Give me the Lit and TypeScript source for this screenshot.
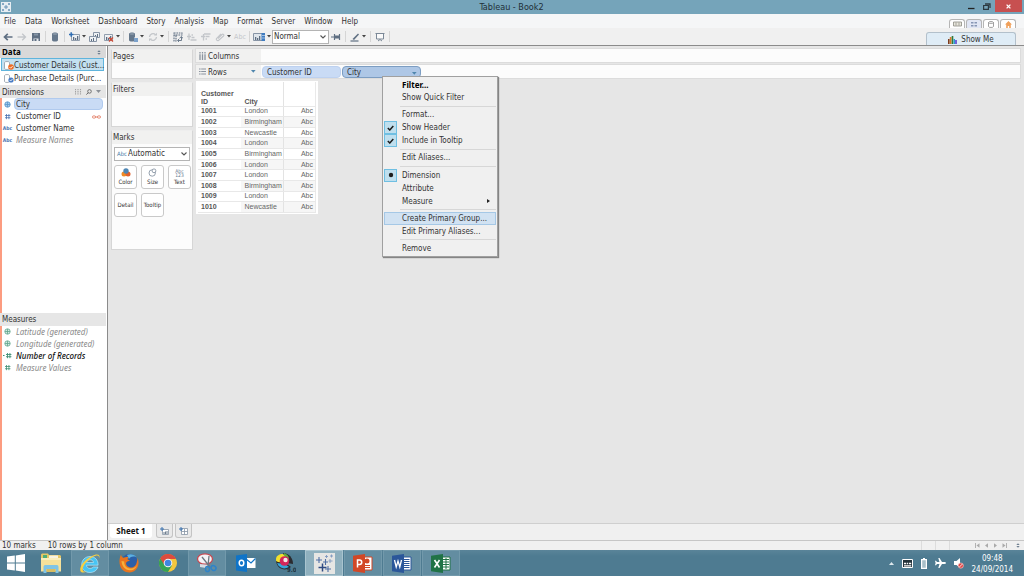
import { LitElement, html, css, svg, nothing, TemplateResult } from "lit";
import { customElement, property } from "lit/decorators.js";
import { classMap } from "lit/directives/class-map.js";

const glyph = (w: number, h: number, body: unknown) =>
  html`<svg class="g" width=${w} height=${h} viewBox="0 0 ${w} ${h}" aria-hidden="true">${body}</svg>`;

const S = "#5f6f82";
const F = "#c3c6ca";
const chart = svg`<path d="M1.5 2.5h8v6h-8z" fill="#eef1f4" stroke="#8794a5" stroke-width=".9"/><path d="M3 8V5h1.3v3zM5 8V6h1.3v2zM7 8V4h1.3v4z" fill=${S}/>`;
const plus = svg`<path d="M0 2.5h4.4M2.2 .3v4.4" stroke="#2f6eb4" stroke-width="1.5"/>`;
const cylinder = (x = 2) =>
  svg`<path d="M${x} 2c0-2 6-2 6 0v6c0 2-6 2-6 0z" fill="#66788c"/><ellipse cx=${x + 3} cy="2" rx="2.4" ry=".8" fill="#93a1b0"/>`;

const icons: Record<string, TemplateResult> = {
  app: glyph(10, 10, svg`<path d="M0 0h10v10H0z" fill="#e6edf2"/><path d="M5 3v4M3 5h4M2 1v2M1 2h2M8 1v2M7 2h2M2 7v2M1 8h2M8 7v2M7 8h2" stroke="#5b8bb0" stroke-width=".9"/>`),
  back: glyph(10, 10, svg`<path d="M9.5 5H2M4.8 1.8L1.5 5l3.3 3.2" fill="none" stroke=${S} stroke-width="1.7"/>`),
  forward: glyph(10, 10, svg`<path d="M.5 5H8M5.2 1.8L8.500 5 5.2 8.2" fill="none" stroke=${F} stroke-width="1.3"/>`),
  save: glyph(10, 10, svg`<path d="M1 1h8v8H1z" fill=${S}/><path d="M3 1.5h4v2H3z" fill="#8594a5"/><path d="M2.5 6.5h5V9h-5z" fill="#e8ebee"/><path d="M3.5 7h2v2h-2z" fill=${S}/>`),
  db: glyph(10, 10, cylinder()),
  newSheet: glyph(11, 10, svg`<g transform="translate(1 0)">${chart}</g>${plus}`),
  duplicate: glyph(11, 10, svg`<path d="M4.5.5h6v5h-6z" fill="#eef1f4" stroke="#8794a5"/><path d="M.5 4.5h7v5h-7z" fill="#eef1f4" stroke="#8794a5"/><path d="M2 9V7h1v2zM4 9V6h1v3zM8 5V2h1v3zM6 4V3h1v1z" fill=${S}/>`),
  clear: glyph(11, 10, svg`${chart}<path d="M6 5.5l4 4M10 5.5l-4 4" stroke="#cf4a34" stroke-width="1.3"/>`),
  dbPause: glyph(10, 10, svg`${cylinder(1)}<path d="M6 5.5h4V10H6z" fill="#f0f0f0"/><path d="M7 6v4M9 6v4" stroke="#2f6eb4" stroke-width="1.2"/>`),
  refresh: glyph(10, 10, svg`<path d="M1.5 5a3.5 3.5 0 0 1 6-2.3M8.5 5a3.5 3.5 0 0 1-6 2.3" fill="none" stroke=${F} stroke-width="1.3"/><path d="M6 3.5h3V.8zM4 6.5H1v2.7z" fill=${F}/>`),
  swap: glyph(10, 10, svg`<path d="M1 1h8v2H1zM1 3h2v6H1z" fill="none" stroke=${S} stroke-width="1.1" stroke-dasharray="1.6 .8"/><path d="M5 8.5h3.5V5M6.5 6.2L8.5 4.5 10 6.5M6 7L4.5 8.5 6 10" fill="none" stroke=${S} stroke-width=".9"/>`),
  sortAsc: glyph(10, 10, svg`<path d="M2 8V1.5M0 4.5h4M4.5 3h1.500M4.500 5.500h3M3.500 8h6" fill="none" stroke=${F} stroke-width="1.3"/>`),
  sortDesc: glyph(10, 10, svg`<path d="M2.5 2v6.5M0 4.5h4M3 2h6.5M4.5 4.5h4M4.5 7H6" fill="none" stroke=${F} stroke-width="1.3"/>`),
  clip: glyph(10, 10, svg`<path d="M3 6.5l4-4a1 1 0 0 1 1.5 1.5l-5 4.5A1.5 1.5 0 0 1 1.5 6.500l4.500-4.700" fill="none" stroke=${F} stroke-width="1.1"/>`),
  showCard: glyph(12, 10, svg`<path d="M.5 1.5h11v7H.5z" fill="#dfe5eb" stroke="#8794a5"/><path d="M2 8V5h1.3v3zM4 8V6h1.3v2zM6 8V4h1.3v4z" fill=${S}/><path d="M8.5 1H12v8H8.5z" fill="#3f7cc0"/><path d="M9 3.5h3M9 6h3" stroke="#cfe0f2" stroke-width=".7"/>`),
  pin: glyph(10, 8, svg`<path d="M0 4h3M3.5 1v6M8.5 1v6" stroke=${S} stroke-width="1.2"/><path d="M4 2.5h4v3H4z" fill=${S}/>`),
  pen: glyph(10, 10, svg`<path d="M2.5 7L8 1.5l1 1L4 8z" fill=${S}/><path d="M.5 9h8" stroke=${S} stroke-width="1.2"/>`),
  present: glyph(10, 10, svg`<path d="M.5 1.5h9M1.5 1.5v5.5h7V1.5" fill="#fafafa" stroke="#7b8897"/><path d="M3 9l2-1.5L7 9" fill="none" stroke="#7b8897"/>`),
  caret: glyph(4, 3, svg`<path d="M0 0h4L2 2.5z" fill="#444"/>`),
  caretGrey: glyph(5, 3, svg`<path d="M0 0h5L2.5 3z" fill="#8a8f96"/>`),
  caretBlue: glyph(5, 3, svg`<path d="M0 0h4.6L2.3 2.7z" fill="#4f86ad"/>`),
  source: glyph(10, 9, svg`<path d="M.5 1.5c0-1.3 5-1.3 5 0v6c0 1.3-5 1.3-5 0z" fill="#fff" stroke="#8e9aa6" stroke-width=".8"/><circle cx="7" cy="6" r="2.8" fill="#ef6b22"/><path d="M5.5 6l1.2 1.2L8.7 5" stroke="#fff" stroke-width=".8" fill="none"/>`),
  sourceBlue: glyph(10, 9, svg`<path d="M.5 1.5c0-1.3 5-1.3 5 0v6c0 1.3-5 1.3-5 0z" fill="#fff" stroke="#8e9aa6" stroke-width=".8"/><circle cx="7" cy="6" r="2.6" fill="#4a7cc4"/><path d="M5.7 6l1 1L8.5 5" stroke="#fff" stroke-width=".8" fill="none"/>`),
  globe: glyph(7, 7, svg`<circle cx="3.5" cy="3.5" r="2.7" fill="#a9cdec" stroke="#5b97cc" stroke-width=".9"/><path d="M3.5 1v5M1 3.5h5" stroke="#5b97cc" stroke-width=".8"/>`),
  globeGreen: glyph(7, 7, svg`<circle cx="3.5" cy="3.5" r="2.7" fill="#d5ebe3" stroke="#5fa58d" stroke-width=".8"/><path d="M3.5 1v5M1 3.5h5" stroke="#5fa58d" stroke-width=".8"/>`),
  hash: glyph(7, 7, svg`<path d="M2.5 1v5.2M4.9 1v5.2M1 2.5h5.4M1 4.7h5.4" stroke="#4a72b0" stroke-width=".8"/>`),
  hashGreen: glyph(7, 7, svg`<path d="M2.5 1v5.2M4.9 1v5.2M1 2.5h5.4M1 4.7h5.4" stroke="#3f9075" stroke-width=".8"/>`),
  calcHash: glyph(9, 7, svg`<path d="M0 3.5h1.5" stroke="#3f9075" stroke-width="1.2"/><path d="M4.5 1v5.2M6.9 1v5.2M3 2.5h5.4M3 4.7h5.4" stroke="#3f9075" stroke-width=".9"/>`),
  link: glyph(9, 4, svg`<rect x=".5" y=".9" width="3" height="2.2" rx="1" fill="none" stroke="#e27a62" stroke-width=".9"/><rect x="5.5" y=".9" width="3" height="2.2" rx="1" fill="none" stroke="#e27a62" stroke-width=".9"/><path d="M3 2h3" stroke="#e27a62" stroke-width=".9"/>`),
  gridSmall: glyph(7, 6, svg`<path d="M.5 0v6M3 0v6M5.5 0v6" stroke="#a2a2a2" stroke-width="1.1" stroke-dasharray="1.3 .8"/>`),
  search: glyph(6, 6, svg`<circle cx="3.5" cy="2.4" r="1.8" fill="none" stroke="#666" stroke-width=".9"/><path d="M2.2 3.7L.4 5.6" stroke="#666"/>`),
  updown: glyph(4, 5, svg`<path d="M.3 2L2 .2 3.7 2zM.3 3h3.4L2 4.8z" fill="#6f7f90"/>`),
  colsIcon: glyph(7, 8, svg`<path d="M1 0v8M3.5 0v8M6 0v8" stroke="#8b949f" stroke-width="1.3" stroke-dasharray="1.6 .6 6"/>`),
  rowsIcon: glyph(7, 7, svg`<path d="M0 1h7M0 3.5h7M0 6h7" stroke="#8b949f" stroke-width="1.2" stroke-dasharray="1.6 .6 6"/>`),
  chevron: glyph(6, 4, svg`<path d="M.5.5L3 3 5.5.5" fill="none" stroke="#555" stroke-width="1.1"/>`),
  color: glyph(10, 9, svg`<circle cx="3" cy="6" r="2.5" fill="#f08a24"/><circle cx="7" cy="6" r="2.5" fill="#e0602c"/><circle cx="5" cy="3" r="2.7" fill="#4f86b4"/>`),
  size: glyph(9, 9, svg`<circle cx="4.2" cy="5" r="3.2" fill="none" stroke="#7c8a9a" stroke-width=".8"/><circle cx="6" cy="2.8" r="1.9" fill="#fff" stroke="#7c8a9a" stroke-width=".8"/>`),
  check: glyph(7, 6, svg`<path d="M.8 3l2 2L6.3 1" fill="none" stroke="#1c1c1c" stroke-width="1.5"/>`),
  dot: glyph(6, 6, svg`<circle cx="3" cy="3" r="2.2" fill="#1c1c1c"/>`),
  sub: glyph(3, 4, svg`<path d="M0 0l3 2-3 2z" fill="#222"/>`),
  tabSheet: glyph(9, 8, svg`<path d="M2.5 2.5h6v5h-6z" fill="#fff" stroke="#8794a5" stroke-width=".8"/><path d="M4 7V5M5.5 7V4.5M7 7V4" stroke=${S} stroke-width=".9"/><path d="M0 2h4M2 0v4" stroke="#3a72b0"/>`),
  tabDash: glyph(9, 8, svg`<path d="M2.5 1.5h6v6h-6zM5.5 2v5.5M2.5 4.5h6" fill="#fff" stroke="#8794a5" stroke-width=".8"/><path d="M0 2h4M2 0v4" stroke="#3a72b0"/>`),
  showMe: glyph(9, 8, svg`<path d="M0 3h1.6v5H0z" fill="#7a3b1e"/><path d="M1.8 1h1.7v7H1.8z" fill="#d97a2a"/><path d="M3.7 0h1.6v8H3.7z" fill="#2e7c3c"/><path d="M5.5 3h1.5v5H5.5z" fill="#2a9bd0"/><path d="M7.2 4h1.6v4H7.2z" fill="#5a3fd0"/>`),
  film: glyph(9, 6, svg`<path d="M.5 1h8v4h-8z" fill="#e9e7dd" stroke="#8b8b83" stroke-width=".8"/><path d="M3 1.5v3M6 1.5v3" stroke="#8b8b83" stroke-width=".7"/>`),
  fourGrid: glyph(6, 6, svg`<path d="M0 1h2.5v1.5H0zM3.5 1H6v1.5H3.5zM0 4h2.5v1.5H0zM3.5 4H6v1.5H3.5z" fill="#8796b4"/>`),
  cyl: glyph(6, 7, svg`<path d="M.5 1.5c0-1.3 5-1.3 5 0v4c0 1.3-5 1.3-5 0zM.5 1.5c0 1.2 5 1.2 5 0" fill="#fff" stroke="#888" stroke-width=".8"/>`),
  home: glyph(7, 7, svg`<path d="M0 3.5L3.5 0 7 3.5H5.8V7H4.2V5H2.8v2H1.2V3.5z" fill="#f0a05a"/>`),
  min: glyph(7, 7, svg`<path d="M0 5.5h6.5" stroke="#222" stroke-width="1.3"/>`),
  restore: glyph(8, 7, svg`<path d="M2 1h5v4" fill="none" stroke="#2c3a42" stroke-width="1.3"/><path d="M.6 2.5h4.8v3.9H.6z" fill="#75a4ba" stroke="#2c3a42" stroke-width="1.2"/>`),
  close: glyph(5, 5, svg`<path d="M.6.6l3.8 3.8M4.4.6L.6 4.4" stroke="#fff" stroke-width="1.3"/>`),
  first: glyph(5, 5, svg`<path d="M.5 0v5" stroke="#aaa" stroke-width=".9"/><path d="M4.5.3v4.4L1.5 2.5z" fill="#aaa"/>`),
  prev: glyph(5, 5, svg`<path d="M4 .3v4.4L1 2.5z" fill="#aaa"/>`),
  next: glyph(5, 5, svg`<path d="M1 .3v4.4l3-2.2z" fill="#aaa"/>`),
  last: glyph(5, 5, svg`<path d="M4.5 0v5" stroke="#aaa" stroke-width=".9"/><path d="M.5.3v4.4l3-2.2z" fill="#aaa"/>`),
  win: glyph(18, 18, svg`<path d="M0 2.6l7.8-1.1v7H0zM8.8 1.4L18 0v8.5H8.8zM0 9.5h7.8v7L0 15.4zM8.8 9.5H18V18l-9.2-1.4z" fill="#fff"/>`),
  explorer: glyph(22, 20, svg`<path d="M1 1.5l1-1h6l1 1.5h11l1 1V18H1z" fill="#e6c766"/><path d="M3 2h4v3H3z" fill="#4fae78"/><path d="M9 2.5h9V6H9z" fill="#f7f3e2"/><path d="M1 5h20v13.5H1z" fill="#f6e19a"/><path d="M1 5h20v2H1z" fill="#fbeebb"/><path d="M3.5 20v-6c0-1.5 1-2 2-2h11c1 0 2 .5 2 2v6h-3v-4h-9v4z" fill="#7fc4e6"/><path d="M6.5 16h9v3h-9z" fill="#d8bd62"/>`),
  ie: glyph(22, 21, svg`<path d="M16.8 12.2H7.5c.2 2 1.6 3.3 3.6 3.3 1.5 0 2.5-.6 3.2-1.5h4.7c-1.1 3.4-4 5.5-8 5.5-5 0-8.3-3.2-8.3-7.8S6.2 3.5 11 3.5s8.3 3.3 8.1 8.7zM7.7 9.5h6.8c-.3-1.7-1.6-2.7-3.4-2.7s-3.1 1-3.4 2.7z" fill="#48c4f4" stroke="#c9effd" stroke-width=".6"/><path d="M20.3 5.5C21.5 1 18 .5 12.5 3.2 5.5 6.7.5 13 1.3 17.5c.5 2.6 3.5 2.5 6.5 1-3.3.6-4.6-.6-4-3.2 1-4.2 5.7-9 10-11.3 3.9-2.1 6.5-2.2 6.5 1.5z" fill="#f8cf42"/>`),
  firefox: glyph(20, 20, svg`<circle cx="10.5" cy="9.5" r="8.5" fill="#2b5fa8"/><path d="M8 2c3-1.5 7-1 9.5 2C13 3 11 4 10 6z" fill="#5cb0e0"/><path d="M2 1.5c-2.3 5-2 11 .8 14.5 3.5 4.3 10.4 4.8 14 .8 3-3.3 3.5-8.3 1.7-12 .1 1.7-.1 2.7-.6 3.7-.5 4-3.4 6.5-6.9 6-3-.5-4.5-3-3.7-5 .8-1.3 2.5-1.2 3.7-1.7L8.5 6.3 9.3 4C7 4 5.5 4.3 4.3 4.8 3 4 2.2 3 2 1.5z" fill="#e8741f"/><path d="M2.5 8c.2 5 3.5 9 8.3 9.3 3.7.2 6.4-2.3 7.2-5.3-1.5 2.5-4 4-7 3.5-4-.5-6-3.5-5.7-7z" fill="#f5b13b"/>`),
  chrome: glyph(18, 18, svg`<circle cx="9" cy="9" r="9" fill="#f4c63d"/><path d="M1.2 4.5A9 9 0 0 0 9 18l4-6.6L9 9z" fill="#35a354"/><path d="M9 5h7.9l-.1-.5A9 9 0 0 0 1.2 4.5L5.5 11z" fill="#dd4b3e"/><circle cx="9" cy="9" r="4.3" fill="#f5f5f5"/><circle cx="9" cy="9" r="3.3" fill="#3f86e0"/>`),
  snip: glyph(22, 20, svg`<ellipse cx="9" cy="6" rx="7.5" ry="5.2" fill="#f3f3f6" stroke="#c8474f" stroke-width="1.3"/><path d="M4 11l9 1-3 3-6-1z" fill="#d9dde4"/><path d="M6 4l8 10M13 3l-1 10" stroke="#6f7780" stroke-width="1.3"/><ellipse cx="11.5" cy="16" rx="2" ry="2.6" fill="none" stroke="#2f83c8" stroke-width="1.5"/><ellipse cx="17.5" cy="15" rx="2.6" ry="2.2" transform="rotate(35 17.5 15)" fill="none" stroke="#2f83c8" stroke-width="1.5"/>`),
  outlook: glyph(20, 18, svg`<path d="M10 4h9.5v10H10z" fill="#fff"/><path d="M10 5l5 4 4.5-4.5" fill="none" stroke="#0f74c8" stroke-width="1.2"/><path d="M0 1.6L11 0v18L0 16.4z" fill="#0f74c8"/><ellipse cx="5.5" cy="9" rx="2.3" ry="2.8" fill="none" stroke="#fff" stroke-width="1.5"/>`),
  swirl: glyph(21, 20, svg`<path d="M8 0C14 0 18 5 18 11l-6-1z" fill="#2b2b2f"/><path d="M9 0c3 1 5 3 5 6l-5-1z" fill="#5fae3f"/><path d="M1 6c0-3 3-5 7-5l4 5-6 8c-3-1-5-4-5-8z" fill="#f3e02c"/><path d="M1 8c1 8 9 11 15 6l-5-4-8-1z" fill="#2b2b2f"/><path d="M2 10c2 5 7 7 12 4l-4-3z" fill="#36a5d9"/><circle cx="9.5" cy="8" r="4.8" fill="#d3265a"/><circle cx="10.5" cy="7" r="2.2" fill="#f3e8e5"/><text x="12" y="19" font-size="6" font-weight="700" fill="#1d3340">9.0</text>`),
  tableau: glyph(21, 21, svg`<path d="M0 0h21v21H0z" fill="#e6e6e4"/><path d="M8.5 10.5v8M4.5 14.5h8" stroke="#2f4a82" stroke-width="1.5"/><path d="M5 4v6M2 7h6M14 13v6M11 16h6M11.5 6v6M9 9h5" stroke="#4f6ea5" stroke-width="1.1"/><path d="M17.5 1.5v3M16 3h3M12.5 2v3M11 3.5h3M16 6v4M14.5 8h4" stroke="#7f98bf" stroke-width=".9"/>`),
  ppt: glyph(20, 19, svg`<path d="M10 3h9v13h-9z" fill="#fff" stroke="#d24726"/><circle cx="14" cy="7" r="2.5" fill="#d24726"/><path d="M12 11.5h5M12 13.5h5" stroke="#d24726"/><path d="M0 1.7L12 0v19L0 17.3z" fill="#d24726"/><path d="M4.5 13.5V6h2a2 2 0 0 1 0 4.5h-2" fill="none" stroke="#fff" stroke-width="1.5"/>`),
  word: glyph(20, 19, svg`<path d="M10 3h9v13h-9z" fill="#fff" stroke="#2b579a"/><path d="M12 5.5h5.5M12 7.5h5.5M12 9.5h5.5M12 11.5h5.5M12 13.5h5.5" stroke="#2b579a"/><path d="M0 1.7L12 0v19L0 17.3z" fill="#2b579a"/><path d="M2.5 6L4.2 13 6 7l1.8 6L9.5 6" fill="none" stroke="#fff" stroke-width="1.3"/>`),
  excel: glyph(20, 19, svg`<path d="M10 3h9v13h-9z" fill="#fff" stroke="#207346"/><path d="M12 5.5h6M12 8h6M12 10.5h6M12 13h6M15 4v11" stroke="#207346"/><path d="M0 1.7L12 0v19L0 17.3z" fill="#207346"/><path d="M3.5 6l5 7.5M8.5 6l-5 7.5" stroke="#fff" stroke-width="1.6"/>`),
  trayUp: glyph(5, 3, svg`<path d="M0 3L2.5 0 5 3z" fill="#dfe9ee"/>`),
  keyboard: glyph(11, 9, svg`<path d="M.5.5h10v8H.5z" fill="#24323a" stroke="#fff"/><path d="M2 4.5h2.300M5 4.5h1.200M7 4.5h2.200M2 6.800h7.200" stroke="#fff" stroke-width="1.3"/>`),
  battery: glyph(6, 11, svg`<path d="M2 0h2v1.5H2z" fill="#fff"/><path d="M.6 1.6h4.8v8.8H.6z" fill="#a9c0ca" stroke="#fff" stroke-width="1.2"/>`),
  plane: glyph(11, 10, svg`<path d="M11 5c0-.8-1-.9-1.5-.9H7L4.5 0H3.3l1.2 4.1H2L1 2.7H0L.6 5 0 7.3h1L2 5.9h2.5L3.3 10h1.2L7 5.9h2.5c.5 0 1.5-.1 1.5-.9z" fill="#fff"/>`),
  speaker: glyph(10, 11, svg`<path d="M0 3h2.5L6 0v10L2.5 7H0z" fill="#fff"/><circle cx="6.8" cy="7.6" r="2.6" fill="#e04545" stroke="#f7c4c4" stroke-width=".7"/><path d="M5.3 9.1l3-3" stroke="#fff" stroke-width=".9"/>`),
};

const base = css`
  * { box-sizing: border-box; }
  :host { font-family: "DejaVu Sans Condensed", "Noto Sans", sans-serif; font-size: 8px; line-height: 12px; color: #333; }
  button, select { font: inherit; color: inherit; border: 0; padding: 0; margin: 0; background: none; border-radius: 0; }
  ul { list-style: none; margin: 0; padding: 0; }
  h1, h2 { font: inherit; margin: 0; }
  .g { display: block; flex: none; }
`;

interface MenuEntry { label: string; mark?: string; bold?: boolean; hot?: boolean; sub?: boolean; sep?: boolean }

const pillMenu: MenuEntry[] = [
  { label: "Filter...", bold: true },
  { label: "Show Quick Filter" },
  { label: "Format...", sep: true },
  { label: "Show Header", mark: "check" },
  { label: "Include in Tooltip", mark: "check" },
  { label: "Edit Aliases...", sep: true },
  { label: "Dimension", mark: "dot", sep: true },
  { label: "Attribute" },
  { label: "Measure", sub: true },
  { label: "Create Primary Group...", hot: true, sep: true },
  { label: "Edit Primary Aliases..." },
  { label: "Remove", sep: true },
];

@customElement("pill-menu")
export class PillMenu extends LitElement {
  static styles = [base, css`
    :host { display: block; }
    .menu { display: flex; flex-direction: column; width: 116px; height: 181px; padding: 1px; background: #f0f0f0; border: 1px solid #a0a0a0; box-shadow: 1px 1px 1px #858585; }
    .item { display: flex; align-items: center; gap: 5px; height: 13px; flex: none; border: 1px solid transparent; text-align: left; white-space: nowrap; line-height: 11px; }
    .mark { display: flex; align-items: center; justify-content: center; width: 13px; height: 13px; margin-left: -1px; flex: none; }
    .mark.on { background: #bfdfee; border: 1px solid #6fbfe2; }
    .label { flex: 1; }
    .bold { font-family: "Noto Sans", sans-serif; font-weight: 700; color: #000; }
    .hot { background: #d1e2f2; border-color: #a5c8e6; }
    .sub { margin-right: 5px; }
    .sep { flex: 1; display: flex; align-items: center; margin-left: 16px; }
    .sep::before { content: ""; flex: 1; height: 1px; background: #d7d7d7; }
  `];
  render() {
    return html`<div class="menu" role="menu">
      ${pillMenu.map((m) => html`
        ${m.sep ? html`<div class="sep" role="separator"></div>` : nothing}
        <button class=${classMap({ item: true, hot: !!m.hot, bold: !!m.bold })} role="menuitem">
          <span class=${classMap({ mark: true, on: !!m.mark })}>${m.mark ? icons[m.mark] : nothing}</span>
          <span class="label">${m.label}</span>
          ${m.sub ? html`<span class="sub">${icons.sub}</span>` : nothing}
        </button>`)}
    </div>`;
  }
}

interface Field { icon: string; name: string; selected?: boolean; muted?: boolean; strong?: boolean; linked?: boolean }

@customElement("field-list")
export class FieldList extends LitElement {
  @property({ attribute: false }) fields: Field[] = [];
  static styles = [base, css`
    :host { display: block; background: #fff; border-left: 2px solid #fc9c80; }
    .field { display: flex; align-items: center; height: 12px; width: 100%; text-align: left; line-height: 10px; }
    .icon { width: 11px; display: flex; justify-content: center; flex: none; }
    .abc { font-size: 5px; font-weight: 700; color: #4a72b0; }
    .name { flex: 1; display: flex; align-items: center; justify-content: space-between; height: 12px; padding: 2px 1px 0; margin: 0 3px 0 1px; border: 1px solid transparent; border-radius: 4px; white-space: nowrap; }
    .selected .name { background: #c9dbf5; border-color: #b0caee; }
    .muted .name, .strong .name { font-family: "Noto Sans", sans-serif; font-style: italic; padding-top: 0; }
    .muted .name { color: #8a8a8a; }
    .strong .name { color: #111; font-weight: 500; }
  `];
  render() {
    return html`<ul>${this.fields.map((f) => html`<li>
      <button class=${classMap({ field: true, selected: !!f.selected, muted: !!f.muted, strong: !!f.strong })}>
        <span class="icon">${f.icon === "abc" ? html`<span class="abc">Abc</span>` : icons[f.icon]}</span>
        <span class="name">${f.name}${f.linked ? icons.link : nothing}</span>
      </button></li>`)}</ul>`;
  }
}

const menus = ["File", "Data", "Worksheet", "Dashboard", "Story", "Analysis", "Map", "Format", "Server", "Window", "Help"];

interface Tool { icon: string; label: string; drop?: boolean }
const tools: (Tool | null)[] = [
  { icon: "back", label: "Undo" }, { icon: "forward", label: "Redo" }, { icon: "save", label: "Save" }, null,
  { icon: "db", label: "Connect to Data" }, null,
  { icon: "newSheet", label: "New Worksheet", drop: true }, { icon: "duplicate", label: "Duplicate" }, { icon: "clear", label: "Clear", drop: true }, null,
  { icon: "dbPause", label: "Auto Updates", drop: true }, { icon: "refresh", label: "Run Update", drop: true }, null,
  { icon: "swap", label: "Swap" }, { icon: "sortAsc", label: "Sort Ascending" }, { icon: "sortDesc", label: "Sort Descending" },
  { icon: "clip", label: "Group", drop: true }, { icon: "abc", label: "Mark Labels" }, null,
  { icon: "showCard", label: "Show Cards", drop: true },
];

const rows: [string, string][] = [
  ["1001", "London"], ["1002", "Birmingham"], ["1003", "Newcastle"], ["1004", "London"], ["1005", "Birmingham"],
  ["1006", "London"], ["1007", "London"], ["1008", "Birmingham"], ["1009", "London"], ["1010", "Newcastle"],
];

interface Task { icon: string; label: string; run?: boolean; active?: boolean }
const tasks: Task[] = [
  { icon: "explorer", label: "File Explorer" }, { icon: "ie", label: "Internet Explorer", run: true },
  { icon: "firefox", label: "Firefox" }, { icon: "chrome", label: "Chrome" },
  { icon: "snip", label: "Snipping Tool", run: true }, { icon: "outlook", label: "Outlook" },
  { icon: "swirl", label: "Designer" }, { icon: "tableau", label: "Tableau", run: true, active: true },
  { icon: "ppt", label: "PowerPoint", run: true }, { icon: "word", label: "Word", run: true }, { icon: "excel", label: "Excel", run: true },
];

const dimensions: Field[] = [
  { icon: "globe", name: "City", selected: true }, { icon: "hash", name: "Customer ID", linked: true },
  { icon: "abc", name: "Customer Name" }, { icon: "abc", name: "Measure Names", muted: true },
];
const measures: Field[] = [
  { icon: "globeGreen", name: "Latitude (generated)", muted: true }, { icon: "globeGreen", name: "Longitude (generated)", muted: true },
  { icon: "calcHash", name: "Number of Records", strong: true }, { icon: "hashGreen", name: "Measure Values", muted: true },
];

@customElement("app-root")
export class AppRoot extends LitElement {
  static styles = [base, css`
    :host { display: flex; flex-direction: column; height: 100vh; overflow: hidden; background: #e6e6e6; }
    .title { display: grid; grid-template-columns: 1fr auto 1fr; align-items: center; height: 14px; background: #75a4ba; padding: 0 2px 0 1px; flex: none; }
    .title h1 { font-size: 9px; color: #1f2f38; }
    .win { display: flex; justify-self: end; align-self: start; height: 12px; }
    .win button { display: flex; align-items: center; justify-content: center; width: 16px; }
    .win .close { width: 27px; background: #c75050; }
    .menubar { display: flex; justify-content: space-between; height: 14px; background: #f5f6f7; flex: none; padding: 0 8px 0 4px; }
    .menubar nav { display: flex; gap: 9px; align-items: center; padding-top: 2px; }
    .views { display: flex; gap: 1px; align-self: end; }
    .views button { display: flex; align-items: center; justify-content: center; width: 16px; height: 9px; background: #fff; border: 1px solid #b5b5b5; border-bottom: 0; border-radius: 3px 3px 0 0; }
    .views .on { background: #e1e6f4; }
    .toolbar { display: flex; align-items: center; height: 18px; background: #f0f0f0; border-bottom: 1px solid #8b8b8b; flex: none; padding: 0 8px 0 1px; }
    .tool { display: flex; align-items: center; justify-content: center; gap: 2px; width: 14px; height: 16px; flex: none; }
    .tool.drop { width: 20px; }
    .tool.faint { color: #c3c6ca; font-size: 7px; }
    .bar { width: 1px; height: 11px; margin: 0 2px; background: #d5d5d5; flex: none; }
    .pick { display: grid; align-items: center; background: #fff; border: 1px solid #b4b4b4; }
    .pick select { appearance: none; grid-area: 1 / 1; width: 100%; height: 100%; outline: 0; }
    .pick .g { grid-area: 1 / 1; justify-self: end; margin-right: 2px; pointer-events: none; }
    .fit { width: 57px; height: 14px; }
    .fit select { padding-left: 1px; }
    .showme { display: flex; align-items: center; justify-content: center; gap: 4px; align-self: end; width: 90px; height: 13px; margin-left: auto; padding-top: 1px; background: #dfecf6; border: 1px solid #b3c0cb; border-bottom: 0; border-radius: 3px 3px 0 0; }
    .work { display: flex; flex: 1; min-height: 0; }
    .side { display: flex; flex-direction: column; width: 108px; flex: none; background: #fff; border-right: 1px solid #8b8b8b; padding-right: 1px; }
    .head { display: flex; align-items: center; gap: 4px; height: 13px; background: #e6e6e6; padding: 0 5px 0 2px; flex: none; }
    .head h2 { flex: 1; padding-top: 2px; }
    .head.data { height: 12px; background: #d9d9d9; }
    .head.data h2 { font-family: "Noto Sans", sans-serif; font-weight: 700; color: #000; padding-top: 0; }
    .sources { padding-bottom: 1px; }
    .source { display: flex; align-items: center; width: 103px; height: 13px; margin-left: 1px; padding: 2px 0 0 2px; border: 1px solid transparent; white-space: nowrap; line-height: 11px; }
    .source.on { background: #c3e0f0; border-color: #5fb4dc; }
    .dims, .meas { flex: 1; }
    .main { display: flex; flex-direction: column; flex: 1; min-width: 0; }
    .canvas { display: flex; flex: 1; gap: 3px; padding: 3px 4px 0 3px; min-height: 0; }
    .cards { display: flex; flex-direction: column; gap: 3px; width: 82px; flex: none; }
    .card { background: #fcfcfc; border: 1px solid #d6d6d6; border-top-color: #eee; }
    .card h2 { height: 13px; line-height: 14px; background: #f1f1f0; padding-left: 1px; }
    .pages { height: 30px; }
    .filters { height: 45px; }
    .marks { height: 120px; }
    .marktype { height: 14px; margin: 3px 2px 4px; }
    .marktype select { padding-left: 13px; line-height: 12px; }
    .marktype .abc { grid-area: 1 / 1; font-size: 6px; color: #4a7fa8; padding-left: 2px; pointer-events: none; z-index: 1; }
    .shelfbtns { display: grid; grid-template-columns: repeat(3, 23px); grid-auto-rows: 24px; gap: 4px; padding-left: 2px; }
    .mk { display: flex; flex-direction: column; align-items: center; justify-content: center; gap: 1px; background: #fff; border: 1px solid #c9c9c9; border-radius: 3px; font-size: 6px; line-height: 8px; }
    .tiny { font-size: 5px; line-height: 4px; color: #6a7b92; }
    .sheet { display: flex; flex-direction: column; flex: 1; gap: 3px; min-width: 0; }
    .shelf { display: flex; height: 13px; background: #fcfcfc; box-shadow: 0 0 0 1px #dcdcdc; flex: none; }
    .shelf h2 { display: flex; align-items: center; gap: 2px; width: 65px; background: #f1f1f0; padding: 0 5px 0 3px; }
    .shelf h2 span { flex: 1; padding-top: 2px; }
    .pill { display: flex; align-items: center; justify-content: space-between; width: 79px; height: 12px; margin: 1px 0 0 1px; padding: 2px 3px 0 4px; background: #c9dbf5; border: 1px solid #bdd1f0; border-radius: 4px; line-height: 10px; }
    .pill.open { background: #aec7e6; border-color: #7c9dc2; }
    .anchor { position: relative; display: flex; }
    .popup { position: absolute; top: 11px; left: 41px; z-index: 5; }
    .viz { align-self: flex-start; width: 122px; background: #fff; padding: 1px 2px; }
    table { border-collapse: collapse; width: 100%; height: 131px; font: 7px/8px "Liberation Sans", Arial, sans-serif; color: #666; }
    th, td { padding: 0; text-align: left; border-bottom: 1px solid #e8e8e8; white-space: nowrap; }
    th { font-weight: 700; color: #555; padding-left: 3px; }
    thead tr { height: 24px; }
    thead th { vertical-align: bottom; white-space: normal; }
    .city { width: 43px; border-right: 1px solid #e3e3e3; padding-left: 4px; }
    .mark { width: 32px; text-align: right; padding-right: 2px; border-right: 1px solid #e9e9e9; }
    tbody tr:nth-child(even) td { background: #f6f6f6; }
    .tabs { display: flex; height: 17px; background: #f0f0f0; border-top: 1px solid #cfcfcf; padding-left: 2px; gap: 4px; flex: none; }
    .tab { width: 42px; height: 14px; background: #fff; font-family: "Noto Sans", sans-serif; font-weight: 700; color: #111; border-radius: 0 0 3px 3px; }
    .add { display: flex; align-items: center; justify-content: center; width: 17px; height: 14px; border: 1px solid #c4c4c4; border-top: 0; border-radius: 0 0 3px 3px; background: #e9e9e9; margin-right: -2px; }
    .status { display: flex; height: 10px; align-items: center; background: #f0f0f0; border-top: 1px solid #c6c6c6; flex: none; padding: 0 1px 0 2px; gap: 12px; line-height: 10px; }
    .status span { padding-top: 1px; }
    .nav { display: flex; align-items: center; align-self: stretch; margin-left: auto; }
    .cell { width: 14px; align-self: stretch; border-left: 1px solid #dcdcdc; }
    .cell.wide { width: 24px; }
    .nav button { width: 9px; display: flex; justify-content: center; }
    .nav .more { width: 10px; margin-left: 4px; }
    .task { display: flex; height: 26px; background: linear-gradient(#5a8499, #4e7b91 6px); flex: none; gap: 1px; align-items: stretch; color: #fff; }
    .task button { display: flex; align-items: center; justify-content: center; width: 38px; }
    .task .start { width: 31px; }
    .task .run { background: #638da1; box-shadow: inset 0 0 0 1px #7299ab; }
    .task .active { background: #8fb0be; box-shadow: inset 0 0 0 1px #a9c4cf; }
    .tray { display: flex; align-items: center; gap: 8px; margin-left: auto; padding-right: 11px; }
    .clock { text-align: center; line-height: 11px; padding-top: 2px; }
  `];

  private tool(t: Tool | null) {
    if (!t) return html`<span class="bar"></span>`;
    return html`<button class=${classMap({ tool: true, drop: !!t.drop, faint: t.icon === "abc" })} aria-label=${t.label}>
      ${t.icon === "abc" ? "Abc" : icons[t.icon]}${t.drop ? icons.caret : nothing}</button>`;
  }

  render() {
    return html`
      <header class="title">
        ${icons.app}<h1>Tableau - Book2</h1>
        <div class="win">
          <button aria-label="Minimize">${icons.min}</button><button aria-label="Restore">${icons.restore}</button>
          <button class="close" aria-label="Close">${icons.close}</button>
        </div>
      </header>
      <div class="menubar">
        <nav>${menus.map((m) => html`<button>${m}</button>`)}</nav>
        <div class="views">
          <button aria-label="Story view">${icons.film}</button><button class="on" aria-label="Worksheets">${icons.fourGrid}</button>
          <button aria-label="Data source">${icons.cyl}</button><button aria-label="Start page">${icons.home}</button>
        </div>
      </div>
      <div class="toolbar">
        ${tools.map((t) => this.tool(t))}
        <div class="pick fit"><select aria-label="Fit"><option>Normal</option></select>${icons.chevron}</div>
        <button class="tool" aria-label="Fix axes">${icons.pin}</button><span class="bar"></span>
        ${this.tool({ icon: "pen", label: "Highlight", drop: true })}<span class="bar"></span>
        <button class="tool" aria-label="Presentation mode">${icons.present}</button><span class="bar"></span>
        <button class="showme">${icons.showMe}Show Me</button>
      </div>
      <div class="work">
        <aside class="side">
          <div class="head data"><h2>Data</h2>${icons.updown}</div>
          <div class="sources">
            <button class="source on">${icons.source}Customer Details (Cust...</button>
            <button class="source">${icons.sourceBlue}Purchase Details (Purc...</button>
          </div>
          <div class="head"><h2>Dimensions</h2>${icons.gridSmall}${icons.search}${icons.caretGrey}</div>
          <field-list class="dims" .fields=${dimensions}></field-list>
          <div class="head"><h2>Measures</h2></div>
          <field-list class="meas" .fields=${measures}></field-list>
        </aside>
        <main class="main">
          <div class="canvas">
            <div class="cards">
              <section class="card pages"><h2>Pages</h2></section>
              <section class="card filters"><h2>Filters</h2></section>
              <section class="card marks"><h2>Marks</h2>
                <div class="pick marktype"><span class="abc">Abc</span>
                  <select aria-label="Mark type"><option>Automatic</option></select>${icons.chevron}</div>
                <div class="shelfbtns">
                  <button class="mk">${icons.color}Color</button>
                  <button class="mk">${icons.size}Size</button>
                  <button class="mk"><span class="tiny">Abc<br />123</span>Text</button>
                  <button class="mk">Detail</button>
                  <button class="mk">Tooltip</button>
                </div>
              </section>
            </div>
            <div class="sheet">
              <div class="shelf"><h2>${icons.colsIcon}<span>Columns</span></h2></div>
              <div class="shelf"><h2>${icons.rowsIcon}<span>Rows</span>${icons.caretBlue}</h2>
                <button class="pill">Customer ID</button>
                <div class="anchor">
                  <button class="pill open" aria-haspopup="menu">City${icons.caretBlue}</button>
                  <pill-menu class="popup"></pill-menu>
                </div>
              </div>
              <div class="viz">
                <table>
                  <thead><tr><th>Customer ID</th><th class="city">City</th><th class="mark"></th></tr></thead>
                  <tbody>${rows.map(([id, city]) => html`<tr><th>${id}</th><td class="city">${city}</td><td class="mark">Abc</td></tr>`)}</tbody>
                </table>
              </div>
            </div>
          </div>
          <div class="tabs">
            <button class="tab">Sheet 1</button>
            <button class="add" aria-label="New worksheet">${icons.tabSheet}</button>
            <button class="add" aria-label="New dashboard">${icons.tabDash}</button>
          </div>
        </main>
      </div>
      <footer class="status">
        <span>10 marks</span><span>10 rows by 1 column</span>
        <div class="nav">
          <span class="cell"></span><span class="cell"></span><span class="cell wide"></span>
          <button aria-label="First">${icons.first}</button><button aria-label="Previous">${icons.prev}</button>
          <button aria-label="Next">${icons.next}</button><button aria-label="Last">${icons.last}</button>
          <button class="more" aria-label="Sheets">${icons.updown}</button>
        </div>
      </footer>
      <div class="task">
        <button class="start" aria-label="Start">${icons.win}</button>
        ${tasks.map((t) => html`<button class=${classMap({ run: !!t.run, active: !!t.active })} aria-label=${t.label}>${icons[t.icon]}</button>`)}
        <div class="tray">${icons.trayUp}${icons.keyboard}${icons.battery}${icons.plane}${icons.speaker}
          <div class="clock">09:48<br />24/09/2014</div></div>
      </div>`;
  }
}
